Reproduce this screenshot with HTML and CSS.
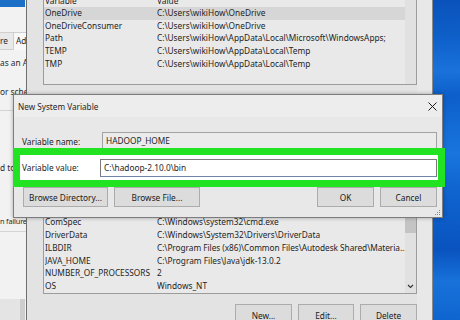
FILE: index.html
```html
<!DOCTYPE html>
<html>
<head>
<meta charset="utf-8">
<link rel="stylesheet" href="styles.css">
</head>
<body>
<div class="desk">
  <div class="win win-sys">
    <div class="sys-blue"></div>
    <div class="sys-tabs"><span class="tab">re</span><span class="tab tab-on">Ad</span></div>
    <div class="sys-text t1">as an A</div>
    <div class="sys-text t2">or sche</div>
    <div class="sys-rule r1"></div>
    <div class="sys-text t3">d to</div>
    <div class="sys-text t4">n failure</div>
    <div class="sys-rule r2"></div>
    <div class="sys-foot"></div>
  </div>

  <div class="win win-env">
    <div class="list list-top">
      <div class="rows">
        <div class="row head"><span>Variable</span><span>Value</span></div>
        <div class="row sel"><span>OneDrive</span><span>C:\Users\wikiHow\OneDrive</span></div>
        <div class="row"><span>OneDriveConsumer</span><span>C:\Users\wikiHow\OneDrive</span></div>
        <div class="row"><span>Path</span><span>C:\Users\wikiHow\AppData\Local\Microsoft\WindowsApps;</span></div>
        <div class="row"><span>TEMP</span><span>C:\Users\wikiHow\AppData\Local\Temp</span></div>
        <div class="row"><span>TMP</span><span>C:\Users\wikiHow\AppData\Local\Temp</span></div>
      </div>
      <div class="scroll"></div>
    </div>

    <div class="list list-bottom">
      <div class="rows rows-end">
        <div class="row"><span>ComSpec</span><span>C:\Windows\system32\cmd.exe</span></div>
        <div class="row"><span>DriverData</span><span>C:\Windows\System32\Drivers\DriverData</span></div>
        <div class="row"><span>ILBDIR</span><span class="clip">C:\Program Files (x86)\Common Files\Autodesk Shared\Materia...</span></div>
        <div class="row"><span>JAVA_HOME</span><span>C:\Program Files\Java\jdk-13.0.2</span></div>
        <div class="row"><span>NUMBER_OF_PROCESSORS</span><span>2</span></div>
        <div class="row"><span>OS</span><span>Windows_NT</span></div>
      </div>
      <div class="scroll scroll-b">
        <div class="thumb"></div>
        <svg class="arrow" width="7" height="5" viewBox="0 0 7 5"><path d="M1 1 L3.5 3.5 L6 1" fill="none" stroke="#333" stroke-width="1.1"/></svg>
      </div>
    </div>

    <div class="env-btns">
      <div class="btn w57">New...</div>
      <div class="btn w56">Edit...</div>
      <div class="btn w57">Delete</div>
    </div>
  </div>

  <div class="dlg">
    <div class="dlg-title">
      <span>New System Variable</span>
      <svg class="close" width="9" height="9" viewBox="0 0 9 9"><path d="M0.5 0.5 L8.5 8.5 M8.5 0.5 L0.5 8.5" stroke="#1a1a1a" stroke-width="1"/></svg>
    </div>
    <div class="dlg-body">
      <div class="field name-row">
        <span class="lbl">Variable name:</span>
        <div class="inp inp-name">HADOOP_HOME</div>
      </div>
      <div class="field value-row">
        <span class="lbl">Variable value:</span>
        <div class="inp inp-value">C:\hadoop-2.10.0\bin</div>
      </div>
      <div class="dlg-btns">
        <div class="btn w85">Browse Directory...</div>
        <div class="btn w86">Browse File...</div>
        <div class="spacer"></div>
        <div class="btn w57">OK</div>
        <div class="btn w57">Cancel</div>
      </div>
    </div>
    <svg class="grip" width="6" height="6" viewBox="0 0 6 6"><rect x="4" y="0" width="1" height="1" fill="#888"/><rect x="2" y="2" width="1" height="1" fill="#888"/><rect x="4" y="2" width="1" height="1" fill="#888"/><rect x="0" y="4" width="1" height="1" fill="#888"/><rect x="2" y="4" width="1" height="1" fill="#888"/><rect x="4" y="4" width="1" height="1" fill="#888"/></svg>
  </div>
</div>
</body>
</html>
```

FILE: styles.css
```css
* { box-sizing: border-box; margin: 0; padding: 0; }
html, body { width: 460px; height: 320px; overflow: hidden; }
body {
  font-family: "Noto Sans", "Open Sans", sans-serif;
  font-size: 8.3px;
  color: #1e1e1e;
  background: #0d60c8;
}
.desk {
  position: relative;
  width: 460px;
  height: 320px;
  overflow: hidden;
  background: linear-gradient(180deg, #0a52bb 0%, #0f60ca 12%, #1a72da 22%, #0d5fca 30%, #1976de 48%, #1066d0 58%, #0953bf 78%, #1872da 88%, #0f65cf 100%);
}
.win { position: absolute; }

/* left system properties window */
.win-sys {
  left: 0; top: 0; width: 27px; height: 320px;
  background: #f2f2f2;
  overflow: hidden;
  white-space: nowrap;
  color: #2a2a2a;
}
.sys-blue { width: 25px; height: 7px; background: #1b6fc6; }
.sys-tabs {
  margin-top: 25px; height: 18px;
  border-top: 1px solid #cfcfcf;
  border-bottom: 1px solid #cfcfcf;
  background: #e9e9e9;
  display: flex; align-items: center;
  line-height: 16px;
}
.tab { width: 13px; overflow: hidden; }
.tab-on { width: 14px; background: #f8f8f8; padding-left: 2px; border-left: 1px solid #cfcfcf; height: 17px; }
.sys-text { height: 11px; line-height: 11px; }
.t1 { margin-top: 7px; }
.t2 { margin-top: 18px; }
.t3 { margin-top: 51px; }
.t4 { margin-top: 43px; font-size: 7.4px; letter-spacing: -0.2px; }
.sys-rule { height: 1px; background: #d4d4d4; }
.r1 { margin-top: 13px; }
.r2 { margin-top: 4px; }
.sys-foot {
  margin-top: 67px; height: 24px;
  background: #e4e4e4;
  border-right: 5px solid #cdcdcd;
  width: 25px;
}

/* environment variables window */
.win-env {
  left: 26px; top: -8px; width: 407px; height: 340px;
  background: #e3e3e3;
  border-left: 1px solid #6e6e6e;
  border-right: 1px solid #8a8a8a;
  padding: 2px 15px 0 16px;
  display: flex; flex-direction: column;
  box-shadow: inset -15px 0 0 #e8e8e8;
}
.list {
  border: 1px solid #9c9c9c;
  background: #e9e9e9;
  display: flex;
  overflow: hidden;
}
.list-top { height: 91px; }
.list-bottom { height: 184px; margin-top: 25px; }
.rows { flex: 1; display: flex; flex-direction: column; overflow: hidden; }
.rows-end { justify-content: flex-end; }
.row {
  display: grid;
  grid-template-columns: 112px 1fr;
  padding-left: 1px;
  height: 12.7px;
  line-height: 12.7px;
  white-space: nowrap;
  flex: none;
}
.list-bottom .row { height: 12.8px; line-height: 12.8px; }
.row span { overflow: hidden; }
.row span.clip { overflow: visible; letter-spacing: -0.05px; }
.row.head { height: 12px; line-height: 12px; }
.row.sel { background: #d6d6d6; }
.scroll { width: 11px; background: #e1e1e1; flex: none; position: relative; }
.scroll-b { display: flex; flex-direction: column; align-items: center; }
.thumb { width: 11px; height: 122px; background: #c4c4c4; }
.arrow { margin-top: auto; margin-bottom: 4px; }

.env-btns {
  margin-top: 10px;
  display: flex; justify-content: flex-end; gap: 6px;
}

.btn {
  height: 22px;
  background: #dcdcdc;
  border: 1px solid #acacac;
  display: flex; align-items: center; justify-content: center;
  white-space: nowrap;
  color: #1a1a1a;
}
.w57 { width: 57px; }
.w56 { width: 56px; }
.w85 { width: 85px; }
.w86 { width: 86px; }

/* dialog */
.dlg {
  position: absolute;
  left: 13px; top: 94px; width: 430px; height: 124px;
  background: #e8e8e8;
  border: 1px solid #7c7c7c;
  box-shadow: 0 0 4px rgba(0,0,0,0.3);
}
.dlg-title {
  height: 22px;
  background: #ededed;
  display: flex; align-items: center; justify-content: space-between;
  padding: 0 5px 0 4px;
  font-size: 8.2px;
}
.close { margin-top: 1px; }
.dlg-body { padding: 15px 0 0 8px; display: flex; flex-direction: column; }
.field { display: flex; align-items: center; }
.lbl { width: 80px; flex: none; }
.name-row { height: 18px; padding-right: 5px; }
.inp {
  height: 18px;
  border: 1px solid #a2a2a2;
  background: #ebebeb;
  padding-left: 3px;
  line-height: 16px;
  white-space: nowrap;
  flex: 1;
}
.value-row {
  position: relative;
  margin: -2px -3px 0 -9px;
  height: 39px;
  border: 7px solid #22e322;
  background: #ffffff;
  padding: 0 1px 0 2px;
}
.value-row .lbl { width: 78px; }
.inp-value {
  background: #ffffff;
  border: 1px solid #7a7a7a;
  border-bottom-color: #6f86a8;
}
.dlg-btns {
  height: 20px;
  display: flex; gap: 6px;
  margin-left: 1px;
  padding-right: 5px;
}
.dlg-btns .btn { height: 20px; }
.spacer { flex: 1; }
.grip { position: absolute; right: 1px; bottom: 1px; }
```
